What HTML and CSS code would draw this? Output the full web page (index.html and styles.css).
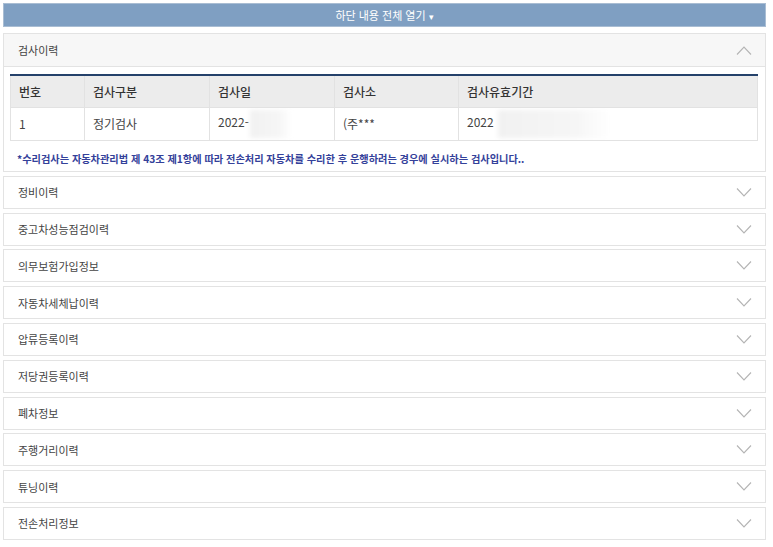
FILE: index.html
```html
<!DOCTYPE html>
<html lang="ko">

<head>
    <meta charset="UTF-8">
    <title>자동차 이력</title>
    <link rel="stylesheet" href="styles.css">
</head>

<body>

    <div class="wrap">
        <div class="open-all">하단 내용 전체 열기<span class="tri">▾</span></div>

        <div class="acc open">
            <div class="acc-head">
                <span>검사이력</span>
                <svg class="chev" width="16" height="9" viewBox="0 0 16 9"><path d="M1 8.5 L8 1 L15 8.5" /></svg>
            </div>
            <div class="acc-body">
                <table class="tbl">
                    <colgroup>
                        <col style="width:74px">
                        <col style="width:125px">
                        <col style="width:125px">
                        <col style="width:124px">
                        <col>
                    </colgroup>
                    <thead>
                        <tr>
                            <th>번호</th>
                            <th>검사구분</th>
                            <th>검사일</th>
                            <th>검사소</th>
                            <th>검사유효기간</th>
                        </tr>
                    </thead>
                    <tbody>
                        <tr>
                            <td>1</td>
                            <td>정기검사</td>
                            <td>2022-<span class="mask m1"></span></td>
                            <td>(주***</td>
                            <td>2022<span class="mask m2"></span></td>
                        </tr>
                    </tbody>
                </table>
                <p class="note">*수리검사는 자동차관리법 제 43조 제1항에 따라 전손처리 자동차를 수리한 후 운행하려는 경우에 실시하는 검사입니다..</p>
            </div>
        </div>

        <div class="acc"><div class="acc-head"><span>정비이력</span><svg class="chev" width="16" height="9" viewBox="0 0 16 9"><path d="M1 0.5 L8 8 L15 0.5" /></svg></div></div>
        <div class="acc"><div class="acc-head"><span>중고차성능점검이력</span><svg class="chev" width="16" height="9" viewBox="0 0 16 9"><path d="M1 0.5 L8 8 L15 0.5" /></svg></div></div>
        <div class="acc"><div class="acc-head"><span>의무보험가입정보</span><svg class="chev" width="16" height="9" viewBox="0 0 16 9"><path d="M1 0.5 L8 8 L15 0.5" /></svg></div></div>
        <div class="acc"><div class="acc-head"><span>자동차세체납이력</span><svg class="chev" width="16" height="9" viewBox="0 0 16 9"><path d="M1 0.5 L8 8 L15 0.5" /></svg></div></div>
        <div class="acc"><div class="acc-head"><span>압류등록이력</span><svg class="chev" width="16" height="9" viewBox="0 0 16 9"><path d="M1 0.5 L8 8 L15 0.5" /></svg></div></div>
        <div class="acc"><div class="acc-head"><span>저당권등록이력</span><svg class="chev" width="16" height="9" viewBox="0 0 16 9"><path d="M1 0.5 L8 8 L15 0.5" /></svg></div></div>
        <div class="acc"><div class="acc-head"><span>폐차정보</span><svg class="chev" width="16" height="9" viewBox="0 0 16 9"><path d="M1 0.5 L8 8 L15 0.5" /></svg></div></div>
        <div class="acc"><div class="acc-head"><span>주행거리이력</span><svg class="chev" width="16" height="9" viewBox="0 0 16 9"><path d="M1 0.5 L8 8 L15 0.5" /></svg></div></div>
        <div class="acc"><div class="acc-head"><span>튜닝이력</span><svg class="chev" width="16" height="9" viewBox="0 0 16 9"><path d="M1 0.5 L8 8 L15 0.5" /></svg></div></div>
        <div class="acc"><div class="acc-head"><span>전손처리정보</span><svg class="chev" width="16" height="9" viewBox="0 0 16 9"><path d="M1 0.5 L8 8 L15 0.5" /></svg></div></div>
    </div>

</body>

</html>
```

FILE: styles.css
```css
* {
    margin: 0;
    padding: 0;
    box-sizing: border-box;
}

body {
    background: #fff;
    font-family: "Noto Sans CJK KR", "Noto Sans", sans-serif;
    color: #333;
}

.wrap {
    padding: 3px 7px 0 3px;
    display: flex;
    flex-direction: column;
}

.open-all {
    height: 24px;
    background: #7f9fc2;
    border: 1px solid #a9bdd3;
    color: #fff;
    font-size: 11px;
    line-height: 22px;
    text-align: center;
    margin-bottom: 6px;
}

.open-all .tri {
    font-size: 9px;
    margin-left: 3px;
}

.acc {
    border: 1px solid #e3e3e3;
    margin-bottom: 3.8px;
    background: #fff;
}

.acc-head {
    height: 31px;
    padding: 0 13px 0 14px;
    display: flex;
    align-items: center;
    justify-content: space-between;
    font-size: 11px;
    color: #444;
}

.acc.open .acc-head {
    height: 33px;
    background: #f7f7f7;
    border-bottom: 1px solid #e3e3e3;
}

.chev path {
    fill: none;
    stroke: #b4b4b4;
    stroke-width: 1.1;
}

.acc-body {
    padding: 7px 7px 0 6px;
    height: 104px;
}

.tbl {
    width: 100%;
    border-collapse: collapse;
    table-layout: fixed;
    border-top: 2px solid #24416a;
    font-size: 12px;
}

.tbl th,
.tbl td {
    height: 32px;
    padding: 0 0 0 8px;
    text-align: left;
    border: 1px solid #e2e2e2;
    white-space: nowrap;
    overflow: hidden;
}

.tbl th {
    background: #ececec;
    font-weight: 500;
    color: #333;
    border-top: 0;
}

.tbl td {
    height: 33px;
    color: #444;
}

.mask {
    display: inline-block;
    vertical-align: middle;
    height: 28px;
    background: linear-gradient(90deg, #f1f1f1 0%, #f6f6f6 70%, #fff 100%);
    filter: blur(2px);
}

.m1 {
    width: 42px;
    margin-left: 1px;
}

.m2 {
    width: 112px;
    margin-left: 4px;
}

.note {
    margin-top: 10px;
    padding-left: 7px;
    font-size: 10.2px;
    font-weight: 700;
    color: #34419a;
}
```
